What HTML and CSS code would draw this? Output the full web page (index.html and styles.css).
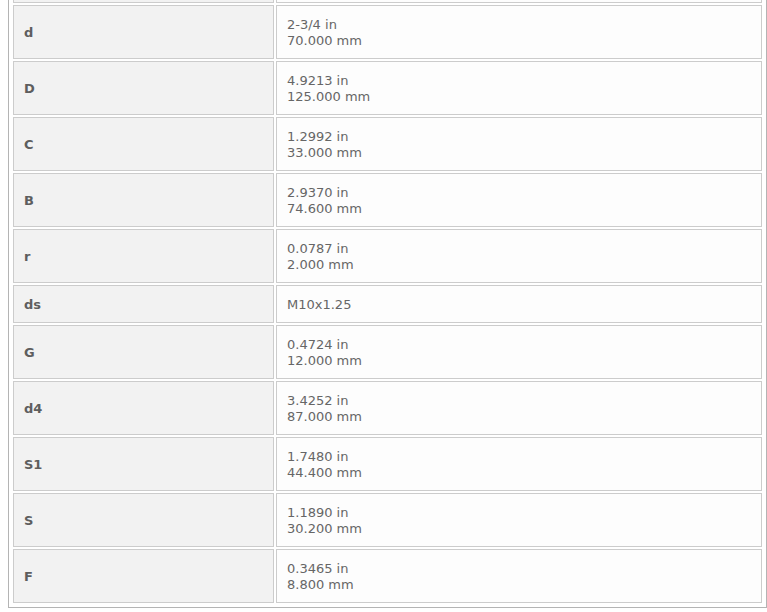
FILE: index.html
```html
<!DOCTYPE html>
<html>
<head>
<meta charset="utf-8">
<link rel="stylesheet" href="styles.css">
</head>
<body>
<div class="spec-box">
  <table class="spec">
    <tr class="stub"><th></th><td></td></tr>
    <tr><th>d</th><td>2-3/4 in<br>70.000 mm</td></tr>
    <tr><th>D</th><td>4.9213 in<br>125.000 mm</td></tr>
    <tr><th>C</th><td>1.2992 in<br>33.000 mm</td></tr>
    <tr><th>B</th><td>2.9370 in<br>74.600 mm</td></tr>
    <tr><th>r</th><td>0.0787 in<br>2.000 mm</td></tr>
    <tr><th>ds</th><td>M10x1.25</td></tr>
    <tr><th>G</th><td>0.4724 in<br>12.000 mm</td></tr>
    <tr><th>d4</th><td>3.4252 in<br>87.000 mm</td></tr>
    <tr><th>S1</th><td>1.7480 in<br>44.400 mm</td></tr>
    <tr><th>S</th><td>1.1890 in<br>30.200 mm</td></tr>
    <tr><th>F</th><td>0.3465 in<br>8.800 mm</td></tr>
  </table>
</div>
</body>
</html>
```
FILE: styles.css
```css
html, body {
  margin: 0;
  padding: 0;
  background: #ffffff;
}
body {
  padding-left: 8px;
  font-family: "DejaVu Sans", Verdana, sans-serif;
  font-size: 13px;
  line-height: 16px;
  color: #666666;
}
.spec-box {
  width: 759px;
  box-sizing: border-box;
  margin-top: -56px;
  border: 1px solid #b4b4b4;
  padding: 2px;
}
.spec {
  width: 100%;
  border-collapse: separate;
  border-spacing: 2px;
  table-layout: fixed;
}
.spec th,
.spec td {
  border: 1px solid #cccccc;
  padding: 11px 10px 9px;
  vertical-align: middle;
  text-align: left;
}
.spec th {
  width: 239px;
  background: #f2f2f2;
  font-weight: bold;
  color: #5e5e5e;
}
.spec td {
  background: #fdfdfd;
  color: #666666;
}
.spec .stub th,
.spec .stub td {
  height: 32px;
}
```
